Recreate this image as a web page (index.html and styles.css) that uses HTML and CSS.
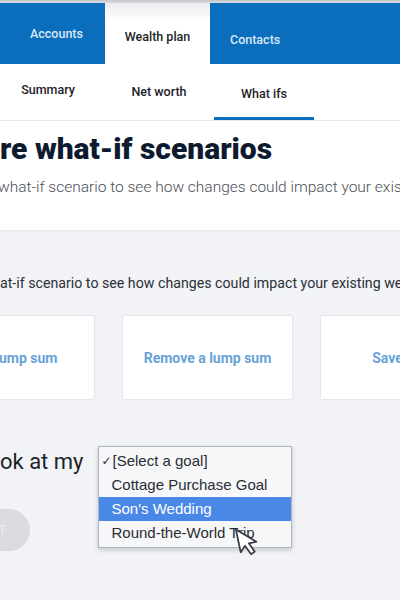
FILE: index.html
```html
<!DOCTYPE html>
<html>
<head>
<meta charset="utf-8">
<link rel="stylesheet" href="styles.css">
</head>
<body>
<div class="edge"></div>
<nav class="tabs">
  <div class="tab tab-blue tab-accounts">Accounts</div>
  <div class="tab tab-wealth">Wealth plan</div>
  <div class="tab tab-blue tab-contacts">Contacts</div>
</nav>
<div class="subbar">
  <div class="subtabs">
    <div class="subtab">Summary</div>
    <div class="subtab">Net worth</div>
    <div class="subtab active">What ifs</div>
  </div>
</div>
<header class="intro-head">
  <h1 class="title">re what-if scenarios</h1>
  <p class="lead">what-if scenario to see how changes could impact your exis</p>
</header>
<main class="panel">
  <p class="panel-text">at-if scenario to see how changes could impact your existing we</p>
  <div class="cards">
    <div class="card">Add a lump sum</div>
    <div class="card">Remove a lump sum</div>
    <div class="card">Save more</div>
  </div>
  <div class="goal-row">
    <span class="goal-label">ok at my</span>
    <div class="goal-select">
      <ul class="listbox">
        <li class="option checked"><span class="check">✓</span><span>[Select a goal]</span></li>
        <li class="option">Cottage Purchase Goal</li>
        <li class="option hover">Son's Wedding</li>
        <li class="option">Round-the-World Trip</li>
      </ul>
    </div>
  </div>
  <div class="pill">T</div>
</main>
<svg class="cursor" width="24" height="32" viewBox="0 0 16 22">
  <path d="M1.5 1.5 L1.5 17.5 L5.3 13.8 L8.2 20.3 L11 19.1 L8.2 12.7 L13.6 12.7 Z" fill="#ffffff" stroke="#3a3d42" stroke-width="1.2" stroke-linejoin="round"/>
</svg>
</body>
</html>
```

FILE: styles.css
```css
html, body {
  margin: 0;
  padding: 0;
}
body {
  width: 400px;
  height: 600px;
  overflow: hidden;
  position: relative;
  background: #f1f3f7;
  font-family: Roboto, "Liberation Sans", sans-serif;
}
.edge {
  height: 3px;
  background: linear-gradient(#c4c5c9, #dcdde0);
}
.tabs {
  display: flex;
  height: 61px;
}
.tab {
  display: flex;
  align-items: center;
  font-size: 12.5px;
  font-weight: 500;
  box-sizing: border-box;
}
.tab-blue {
  background: #0a6ebd;
  color: #dce9f7;
}
.tab-accounts {
  width: 105px;
  justify-content: center;
  padding-left: 8px;
}
.tab-wealth {
  width: 105px;
  justify-content: center;
  padding-top: 6px;
  background: linear-gradient(#ececee, #ffffff 30%);
  color: #1c1f24;
}
.tab-contacts {
  flex: 1;
  padding-left: 20px;
  padding-top: 12px;
}
.subbar {
  background: #ffffff;
  border-bottom: 1px solid #e6e8ec;
}
.subtabs {
  display: flex;
  margin-left: -2px;
  height: 56px;
}
.subtab {
  width: 100px;
  box-sizing: border-box;
  display: flex;
  align-items: center;
  justify-content: center;
  font-size: 12.5px;
  font-weight: 500;
  color: #1e2228;
  border-bottom: 3px solid transparent;
}
.subtab:nth-child(1) {
  padding-bottom: 2px;
}
.subtab:nth-child(2) {
  margin-left: 11px;
  padding-top: 1px;
}
.subtab.active {
  margin-left: 5px;
  border-bottom-color: #0a6ebd;
  padding-top: 6px;
}
.intro-head {
  background: #ffffff;
  height: 109px;
  box-sizing: border-box;
  padding-top: 10px;
  box-shadow: 0 1px 2px rgba(0, 0, 0, 0.06);
  position: relative;
}
.title {
  margin: 0;
  font-size: 30px;
  line-height: 36px;
  font-weight: 900;
  color: #0d1a30;
  white-space: nowrap;
}
.lead {
  margin: 10px 0 0 -2px;
  font-size: 15.5px;
  line-height: 20px;
  font-weight: 300;
  color: #4b5058;
  white-space: nowrap;
}
.panel {
  padding-top: 43px;
}
.panel-text {
  margin: 0;
  font-size: 14.2px;
  line-height: 20px;
  color: #2c3036;
  white-space: nowrap;
}
.cards {
  display: flex;
  gap: 27px;
  margin: 22px 0 0 -76px;
}
.card {
  flex: 0 0 171px;
  height: 85px;
  box-sizing: border-box;
  background: #ffffff;
  border: 1px solid #e3e6ea;
  border-radius: 2px;
  display: flex;
  align-items: center;
  justify-content: center;
  color: #67a3d7;
  font-size: 14px;
  font-weight: 700;
  white-space: nowrap;
}
.card:first-child {
  padding-right: 6px;
}
.goal-row {
  display: flex;
  align-items: center;
  gap: 15px;
  margin-top: 46px;
  height: 30px;
}
.goal-label {
  font-size: 22px;
  line-height: 30px;
  color: #1f2329;
  white-space: nowrap;
  padding-top: 2px;
}
.goal-select {
  position: relative;
  width: 194px;
  height: 30px;
}
.listbox {
  position: absolute;
  top: 0;
  left: 0;
  width: 194px;
  box-sizing: border-box;
  margin: 0;
  padding: 2px 0;
  list-style: none;
  background: #f6f7f9;
  border: 1px solid #aeb4be;
  box-shadow: 0 2px 5px rgba(0, 0, 0, 0.18);
  font-family: "Liberation Sans", Arial, sans-serif;
  font-size: 15px;
  color: #2a2d33;
  z-index: 2;
}
.option {
  height: 24px;
  line-height: 24px;
  padding-left: 12px;
  white-space: nowrap;
}
.option.checked {
  display: flex;
  padding-left: 2px;
}
.check {
  flex: 0 0 11px;
  width: 11px;
  overflow: hidden;
  font-family: "DejaVu Sans", sans-serif;
  font-size: 12px;
}
.option.hover {
  background: #4a88e8;
  color: #ffffff;
}
.pill {
  margin: 33px 0 0 -26px;
  width: 56px;
  height: 42px;
  box-sizing: border-box;
  border-radius: 21px;
  background: #d9dbe0;
  color: #eef0f3;
  font-size: 12px;
  display: flex;
  align-items: center;
  justify-content: flex-end;
  padding-right: 24px;
}
.cursor {
  position: absolute;
  left: 236px;
  top: 525px;
  transform: rotate(-12deg);
  z-index: 3;
}
```
